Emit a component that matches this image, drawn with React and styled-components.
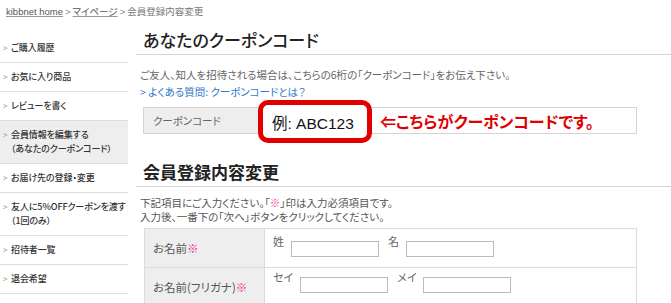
import React from "react"
import styled, { createGlobalStyle } from "styled-components"

const GlobalStyle = createGlobalStyle`
    body {
        margin: 0;
        background: #fff;
        font-family: "Noto Sans CJK JP", "Liberation Sans", sans-serif;
        color: #333;
    }
`

const menu = [
    { label: ["ご購入履歴"] },
    { label: ["お気に入り商品"] },
    { label: ["レビューを書く"] },
    { label: ["会員情報を編集する", "（あなたのクーポンコード）"], active: true },
    { label: ["お届け先の登録・変更"] },
    { label: ["友人に5%OFFクーポンを渡す", "（1回のみ）"] },
    { label: ["招待者一覧"] },
    { label: ["退会希望"] },
]

export default function App() {
    return (
        <Page>
            <GlobalStyle />
            <Breadcrumb>
                <a href="#">kibbnet home</a>
                <Sep>&gt;</Sep>
                <a href="#">マイページ</a>
                <Sep>&gt;</Sep>
                <span>会員登録内容変更</span>
            </Breadcrumb>

            <Layout>
                <Sidebar>
                    {menu.map((item, i) => (
                        <MenuItem key={i} $active={item.active}>
                            <Chevron>&gt;</Chevron>
                            <span>
                                {item.label.map((line, j) => (
                                    <React.Fragment key={j}>
                                        {j > 0 && <br />}
                                        {line}
                                    </React.Fragment>
                                ))}
                            </span>
                        </MenuItem>
                    ))}
                </Sidebar>

                <Main>
                    <Heading $weight={500}>あなたのクーポンコード</Heading>
                    <Intro>
                        <p>ご友人、知人を招待される場合は、こちらの6桁の「クーポンコード」をお伝え下さい。</p>
                        <FaqLink href="#">&gt; よくある質問: クーポンコードとは？</FaqLink>
                    </Intro>

                    <CouponRow>
                        <CouponLabel>クーポンコード</CouponLabel>
                        <CouponValue>例: ABC123</CouponValue>
                        <CouponNote>⇐こちらがクーポンコードです。</CouponNote>
                    </CouponRow>

                    <Heading $weight={700} $top={26}>会員登録内容変更</Heading>
                    <Notice>
                        <span>下記項目にご入力ください。「<Mark>※</Mark>」印は入力必須項目です。</span>
                        <span>入力後、一番下の「次へ」ボタンをクリックしてください。</span>
                    </Notice>

                    <FormTable>
                        <FormRow>
                            <LabelCell>お名前<Mark>※</Mark></LabelCell>
                            <ValueCell $pad={6}>
                                <Field><FieldLabel>姓</FieldLabel><TextInput /></Field>
                                <Field><FieldLabel>名</FieldLabel><TextInput /></Field>
                            </ValueCell>
                        </FormRow>
                        <FormRow>
                            <LabelCell>お名前(フリガナ)<Mark>※</Mark></LabelCell>
                            <ValueCell $pad={3}>
                                <Field><FieldLabel>セイ</FieldLabel><TextInput /></Field>
                                <Field><FieldLabel>メイ</FieldLabel><TextInput /></Field>
                            </ValueCell>
                        </FormRow>
                    </FormTable>
                </Main>
            </Layout>
        </Page>
    )
}

const Page = styled.div`
    width: 671px;
    height: 303px;
    overflow: hidden;
`

const Breadcrumb = styled.div`
    height: 26px;
    box-sizing: border-box;
    padding: 6px 6px 0;
    font-family: "Liberation Sans", "Noto Sans CJK JP", sans-serif;
    font-size: 9.5px;
    line-height: 12px;
    color: #777;
    font-feature-settings: "palt";
    a {
        color: #555;
        text-decoration: underline;
        text-decoration-color: #999;
    }
`

const Sep = styled.span`
    margin: 0 2px;
    color: #888;
`

const Layout = styled.div`
    display: flex;
    align-items: flex-start;
`

const Sidebar = styled.ul`
    width: 128px;
    margin: 0;
    padding: 8px 0 0;
    list-style: none;
`

const MenuItem = styled.li`
    display: flex;
    align-items: flex-start;
    padding: 7px 0 7px 3px;
    border-bottom: 1px solid #ddd;
    background: ${p => (p.$active ? "#eeeeee" : "transparent")};
    font-size: 9px;
    line-height: 14px;
    font-weight: 500;
    letter-spacing: -0.1px;
    color: #333;
    white-space: nowrap;
    font-feature-settings: "palt";
`

const Chevron = styled.span`
    flex-shrink: 0;
    width: 8px;
    color: #aaa;
    font-size: 8px;
`

const Main = styled.div`
    flex: 1;
    margin-left: 8px;
    padding-top: 2px;
`

const Heading = styled.h2`
    margin: ${p => p.$top || 0}px 0 0;
    padding: 0 0 2px 7px;
    border-bottom: 1px solid #d4d4d4;
    font-size: 17px;
    line-height: 24px;
    font-weight: ${p => p.$weight};
    color: #222;
    font-feature-settings: "palt";
`

const Intro = styled.div`
    margin-top: 11px;
    padding-left: 4px;
    font-size: 10.5px;
    line-height: 17px;
    color: #666;
    font-feature-settings: "palt";
    p {
        margin: 0;
    }
`

const FaqLink = styled.a`
    display: block;
    color: #2f79c9;
    text-decoration: none;
`

const CouponRow = styled.div`
    display: flex;
    align-items: flex-start;
    height: 27px;
    box-sizing: border-box;
    margin: 7px 34px 0 7px;
    border: 1px solid #d4d4d4;
`

const CouponLabel = styled.div`
    width: 114px;
    height: 100%;
    box-sizing: border-box;
    padding-left: 9px;
    display: flex;
    align-items: center;
    background: #eeeeee;
    font-size: 10.5px;
    color: #666;
    font-feature-settings: "palt";
`

const CouponValue = styled.div`
    width: 114px;
    height: 43px;
    box-sizing: border-box;
    margin: -8px 0 -10px;
    padding-left: 9px;
    display: flex;
    align-items: center;
    border: 5px solid #e00000;
    border-radius: 10px;
    background: #fff;
    font-family: "Liberation Sans", "Noto Sans CJK JP", sans-serif;
    font-size: 15.5px;
    color: #111;
`

const CouponNote = styled.div`
    align-self: center;
    margin-left: 8px;
    font-size: 16px;
    font-weight: 700;
    color: #e00000;
    white-space: nowrap;
    font-feature-settings: "palt";
`

const Notice = styled.p`
    margin: 9px 0 0;
    padding-left: 4px;
    display: flex;
    flex-direction: column;
    font-size: 10.5px;
    line-height: 14px;
    color: #555;
    font-feature-settings: "palt";
`

const Mark = styled.span`
    color: #f0309a;
`

const FormTable = styled.div`
    margin: 4px 34px 0 8px;
    border: 1px solid #dcdcdc;
    border-bottom: none;
`

const FormRow = styled.div`
    display: flex;
    height: 38px;
    border-bottom: 1px solid #dcdcdc;
`

const LabelCell = styled.div`
    width: 120px;
    padding-left: 8px;
    box-sizing: border-box;
    display: flex;
    align-items: center;
    background: #eeeeee;
    border-right: 1px solid #dcdcdc;
    font-size: 11.5px;
    color: #555;
    font-feature-settings: "palt";
`

const ValueCell = styled.div`
    display: flex;
    align-items: flex-start;
    gap: 9px;
    padding: ${p => p.$pad}px 0 0 8px;
`

const Field = styled.div`
    display: flex;
    align-items: flex-start;
    gap: 7px;
`

const FieldLabel = styled.span`
    font-size: 11px;
    line-height: 12px;
    color: #666;
    font-feature-settings: "palt";
`

const TextInput = styled.input.attrs({ type: "text" })`
    width: 88px;
    height: 16px;
    box-sizing: border-box;
    margin: 6px 0 0;
    border: 1px solid #bbb;
    padding: 0;
`
